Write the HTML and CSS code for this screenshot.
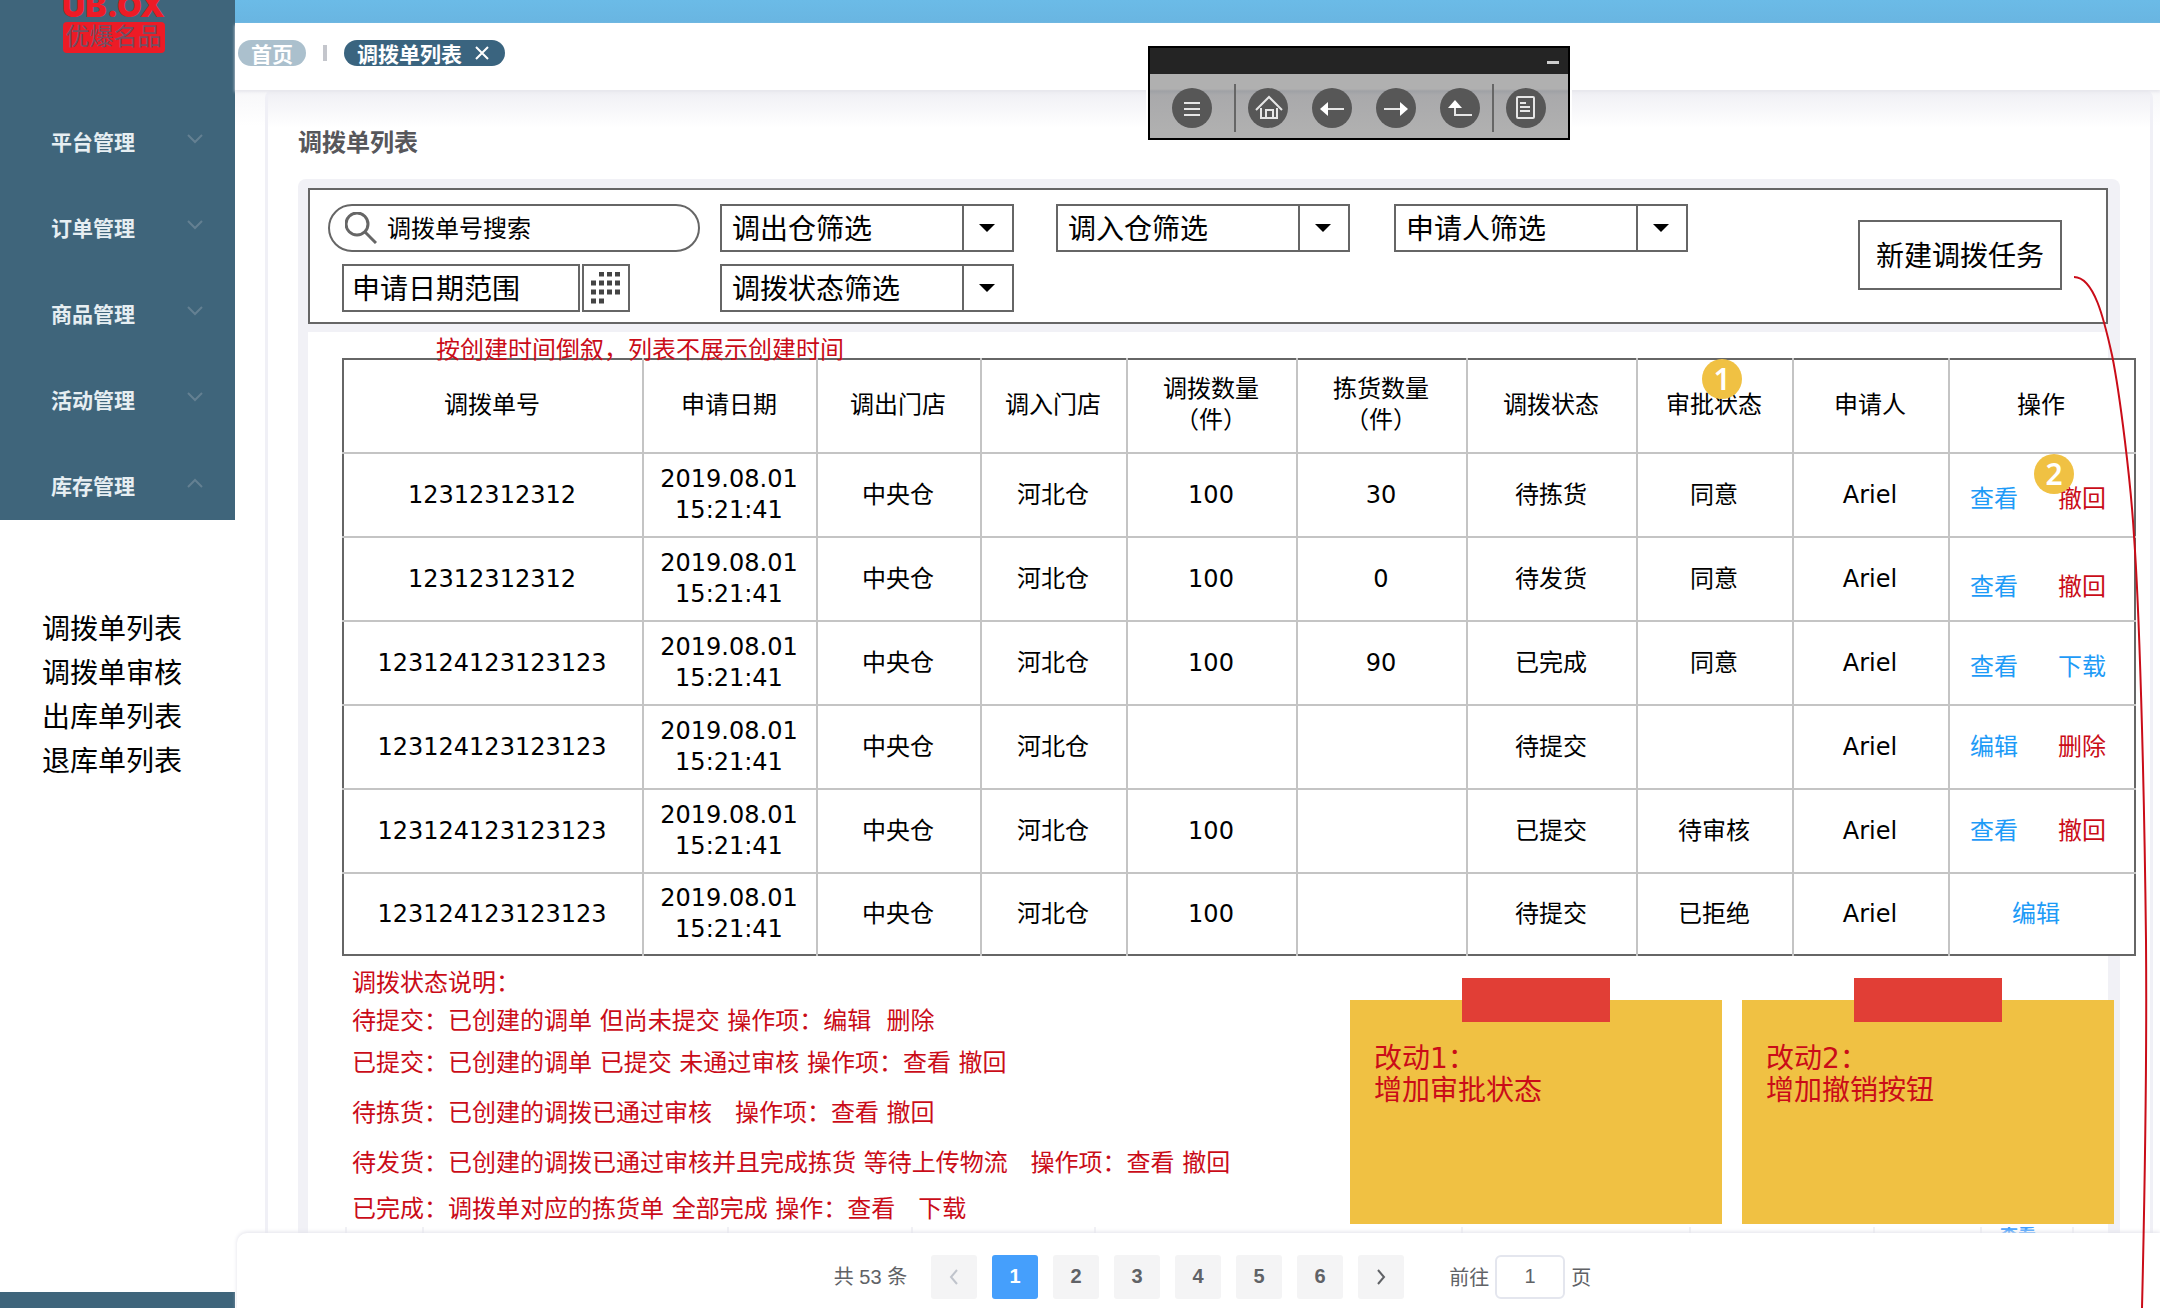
FILE: index.html
```html
<!DOCTYPE html>
<html lang="zh-CN">
<head>
<meta charset="utf-8">
<title>调拨单列表</title>
<link rel="stylesheet" href="styles.css">
</head>
<body>
<div class="page">
  <aside class="sidebar">
    <div class="sidebar-main">
      <div class="logo"><span class="logo-name">UB.OX</span><span class="logo-sub">优爆名品</span></div>
      <nav class="menu">
        <a href="#">平台管理<svg viewBox="0 0 16 10"><path d="M1 1l7 7 7-7"/></svg></a>
        <a href="#">订单管理<svg viewBox="0 0 16 10"><path d="M1 1l7 7 7-7"/></svg></a>
        <a href="#">商品管理<svg viewBox="0 0 16 10"><path d="M1 1l7 7 7-7"/></svg></a>
        <a href="#">活动管理<svg viewBox="0 0 16 10"><path d="M1 1l7 7 7-7"/></svg></a>
        <a href="#">库存管理<svg viewBox="0 0 16 10"><path d="M1 9l7-7 7 7"/></svg></a>
      </nav>
    </div>
    <nav class="submenu">
      <a href="#">调拨单列表</a>
      <a href="#">调拨单审核</a>
      <a href="#">出库单列表</a>
      <a href="#">退库单列表</a>
    </nav>
    <div class="sidebar-foot"></div>
  </aside>

  <main class="main">
    <div class="topbar"></div>
    <div class="tabs">
      <a class="tab tab-home" href="#">首页</a>
      <span class="tab-sep"></span>
      <a class="tab tab-current" href="#">调拨单列表<svg viewBox="0 0 14 14"><path d="M1 1l12 12M13 1L1 13"/></svg></a>
    </div>

    <div class="content">
      <section class="card">
        <h1 class="card-title">调拨单列表</h1>
        <div class="panel">
          <form class="filters">
            <div class="filter-grid">
              <label class="search">
                <svg viewBox="0 0 32 32"><circle cx="12" cy="12" r="11"/><path d="M20 20l11 11"/></svg>
                <input type="text" placeholder="调拨单号搜索" aria-label="调拨单号搜索">
              </label>
              <div class="select"><select aria-label="调出仓筛选"><option>调出仓筛选</option></select></div>
              <div class="select"><select aria-label="调入仓筛选"><option>调入仓筛选</option></select></div>
              <div class="select"><select aria-label="申请人筛选"><option>申请人筛选</option></select></div>
              <div class="date">
                <input type="text" placeholder="申请日期范围" aria-label="申请日期范围">
                <button type="button" aria-label="选择日期">
                  <svg viewBox="0 0 30 32"><path d="M8 2h5M16 2h5M24 2h5M0 11h5M8 11h5M16 11h5M24 11h5M0 20h5M8 20h5M16 20h5M24 20h5M0 29h5M8 29h5"/></svg>
                </button>
              </div>
              <div class="select"><select aria-label="调拨状态筛选"><option>调拨状态筛选</option></select></div>
            </div>
            <button class="create" type="button">新建调拨任务</button>
          </form>

          <div class="sheet">
            <p class="remark">按创建时间倒叙，列表不展示创建时间</p>
            <table class="orders">
              <colgroup><col class="c-no"><col class="c-date"><col class="c-out"><col class="c-in"><col class="c-qty"><col class="c-qty"><col class="c-qty"><col class="c-audit"><col class="c-audit"><col></colgroup>
              <thead>
                <tr><th>调拨单号</th><th>申请日期</th><th>调出门店</th><th>调入门店</th><th>调拨数量<br>（件）</th><th>拣货数量<br>（件）</th><th>调拨状态</th><th><span class="marked">审批状态<i class="badge badge-audit">1</i></span></th><th>申请人</th><th>操作</th></tr>
              </thead>
              <tbody>
                <tr><td>12312312312</td><td>2019.08.01<br>15:21:41</td><td>中央仓</td><td>河北仓</td><td>100</td><td>30</td><td>待拣货</td><td>同意</td><td>Ariel</td>
                  <td><div class="actions low"><a href="#">查看</a><a class="danger marked" href="#">撤回<i class="badge badge-undo">2</i></a></div></td></tr>
                <tr><td>12312312312</td><td>2019.08.01<br>15:21:41</td><td>中央仓</td><td>河北仓</td><td>100</td><td>0</td><td>待发货</td><td>同意</td><td>Ariel</td>
                  <td><div class="actions lower"><a href="#">查看</a><a class="danger" href="#">撤回</a></div></td></tr>
                <tr><td>123124123123123</td><td>2019.08.01<br>15:21:41</td><td>中央仓</td><td>河北仓</td><td>100</td><td>90</td><td>已完成</td><td>同意</td><td>Ariel</td>
                  <td><div class="actions low"><a href="#">查看</a><a href="#">下载</a></div></td></tr>
                <tr><td>123124123123123</td><td>2019.08.01<br>15:21:41</td><td>中央仓</td><td>河北仓</td><td></td><td></td><td>待提交</td><td></td><td>Ariel</td>
                  <td><div class="actions"><a href="#">编辑</a><a class="danger" href="#">删除</a></div></td></tr>
                <tr><td>123124123123123</td><td>2019.08.01<br>15:21:41</td><td>中央仓</td><td>河北仓</td><td>100</td><td></td><td>已提交</td><td>待审核</td><td>Ariel</td>
                  <td><div class="actions"><a href="#">查看</a><a class="danger" href="#">撤回</a></div></td></tr>
                <tr><td>123124123123123</td><td>2019.08.01<br>15:21:41</td><td>中央仓</td><td>河北仓</td><td>100</td><td></td><td>待提交</td><td>已拒绝</td><td>Ariel</td>
                  <td><div class="actions single"><a href="#">编辑</a></div></td></tr>
              </tbody>
            </table>

            <div class="below">
              <div class="notes">
                <p>调拨状态说明：</p>
                <p>待提交：已创建的调单 但尚未提交 操作项：编辑&nbsp; 删除</p>
                <p class="gap-s">已提交：已创建的调单 已提交 未通过审核 操作项：查看 撤回</p>
                <p class="gap-l">待拣货：已创建的调拨已通过审核&nbsp;&nbsp; 操作项：查看 撤回</p>
                <p class="gap-l">待发货：已创建的调拨已通过审核并且完成拣货 等待上传物流&nbsp;&nbsp; 操作项：查看 撤回</p>
                <p class="gap-m">已完成：调拨单对应的拣货单 全部完成 操作：查看&nbsp;&nbsp; 下载</p>
              </div>
              <div class="stickies">
                <div class="sticky">改动1：<br>增加审批状态</div>
                <div class="sticky">改动2：<br>增加撤销按钮</div>
              </div>
            </div>
            <div class="peek"><span></span><span></span><span></span><span></span><span></span><span></span><span></span><span></span><span class="peek-link">查看</span><span></span></div>
          </div>
        </div>
      </section>
    </div>

    <footer class="pager">
      <span class="total">共 53 条</span>
      <div class="pages">
        <button type="button" class="off" aria-label="上一页"><svg viewBox="0 0 10 16"><path d="M8 1L2 8l6 7"/></svg></button>
        <button type="button" class="current">1</button>
        <button type="button">2</button>
        <button type="button">3</button>
        <button type="button">4</button>
        <button type="button">5</button>
        <button type="button">6</button>
        <button type="button" aria-label="下一页"><svg viewBox="0 0 10 16"><path d="M2 1l6 7-6 7"/></svg></button>
      </div>
      <label class="jump">前往<input type="text" value="1">页</label>
    </footer>
  </main>

  <svg class="flow-line" width="100" height="1044" viewBox="0 0 100 1044"><path d="M14 13C34 13 44 55 52 91C60 130 71 220 74 272C79 340 84 500 86 676C87 800 84 960 82 1044"/></svg>

  <div class="toolbox">
    <div class="toolbox-title"><span></span></div>
    <div class="toolbox-body">
      <button type="button" aria-label="菜单"><svg viewBox="0 0 40 40"><path d="M12 15h16M12 21h16M12 27h16"/></svg></button>
      <div class="toolbox-nav">
        <button type="button" aria-label="主页"><svg viewBox="0 0 40 40"><path d="M8 22L21 9l13 13M13 20v10h16V20M18 30v-8h7v8"/></svg></button>
        <button type="button" aria-label="后退"><svg viewBox="0 0 40 40"><path d="M12 21h20"/><path class="fill" d="M8 21l8-7v14z"/></svg></button>
        <button type="button" aria-label="前进"><svg viewBox="0 0 40 40"><path d="M8 21h20"/><path class="fill" d="M32 21l-8-7v14z"/></svg></button>
        <button type="button" aria-label="返回上级"><svg viewBox="0 0 40 40"><path d="M15 18v9h17"/><path class="fill" d="M15 12l7 8H8z"/></svg></button>
      </div>
      <button type="button" aria-label="文档"><svg viewBox="0 0 40 40"><rect x="11" y="9" width="17" height="21" rx="1"/><path d="M14 15h6M14 19h10M14 23h10"/></svg></button>
    </div>
  </div>
</div>
</body>
</html>
```
FILE: styles.css
```css
* { box-sizing: border-box; }

body {
  margin: 0;
  background: #fff;
  color: #000;
  font-family: "DejaVu Sans", "Noto Sans CJK SC", sans-serif;
  font-size: 24px;
  overflow-x: hidden;
}

a { color: inherit; text-decoration: none; }
p { margin: 0; }
input, select, button { font-family: inherit; color: inherit; }
svg { fill: none; stroke: currentColor; stroke-width: 2; flex: none; }

.page { position: relative; display: flex; min-height: 100vh; }

/* Sidebar */
.sidebar { width: 235px; flex: none; display: flex; flex-direction: column; background: #fff; }
.sidebar-main { background: #3f657b; }
.logo { height: 108px; display: flex; flex-direction: column; align-items: center; padding-right: 8px; overflow: hidden; }
.logo-name {
  height: 18px;
  display: flex;
  align-items: flex-end;
  color: #ed1b26;
  font: 900 32px/24px Inter, sans-serif;
}
.logo-sub {
  width: 102px;
  height: 31px;
  margin-top: 4px;
  border-radius: 4px;
  background: #ed1b26;
  color: #735064;
  font-size: 24px;
  line-height: 30px;
  text-align: center;
}
.menu { display: flex; flex-direction: column; gap: 20px; padding-bottom: 2px; }
.menu a {
  height: 66px;
  padding: 0 32px 0 51px;
  display: flex;
  align-items: center;
  justify-content: space-between;
  color: #e6eef2;
  font-size: 21px;
  font-weight: 700;
}
.menu svg { width: 16px; height: 10px; margin-bottom: 4px; color: #648092; }
.submenu { flex: 1; display: flex; flex-direction: column; padding: 88px 0 0 42px; font-size: 28px; line-height: 44px; }
.sidebar-foot { height: 19px; background: #3f657b; }

/* Header */
.main { flex: 1; min-width: 0; display: flex; flex-direction: column; }
.topbar { height: 23px; background: linear-gradient(#6bbbe7, #69b5e1); }
.tabs {
  position: relative;
  height: 67px;
  padding: 0 0 8px 3px;
  display: flex;
  align-items: center;
  gap: 17px;
  background: #fff;
  box-shadow: 0 2px 3px #e6e6ec;
}
.tab {
  height: 26px;
  padding: 0 13px;
  display: flex;
  align-items: center;
  border-radius: 13px;
  color: #fff;
  font-size: 21px;
  font-weight: 700;
}
.tab-home { background: #abc0cd; }
.tab-sep { width: 4px; height: 16px; background: #c4c6cc; }
.tab-current { gap: 13px; padding-right: 16px; background: #3a647f; }
.tab-current svg { width: 14px; height: 14px; }

/* Card */
.content { flex: 1; display: flex; padding: 0 7px 0 30px; background: linear-gradient(#f7f7f9, #fff 36px); }
.card {
  flex: 1;
  min-width: 0;
  display: flex;
  flex-direction: column;
  padding: 36px 30px 0;
  border: solid #f0f0f6;
  border-width: 0 3px;
  border-radius: 8px 8px 0 0;
  background: linear-gradient(#efeff4, #fff 38px);
}
.card-title { margin: 0 0 19px; color: #57575b; font-size: 24px; line-height: 34px; }
.panel { flex: 1; padding: 9px 12px 0 10px; border-radius: 8px 8px 0 0; background: #f1f1f6; }

/* Filters */
.filters {
  display: flex;
  align-items: flex-start;
  justify-content: space-between;
  height: 136px;
  margin-bottom: 8px;
  padding: 14px 44px 0 18px;
  border: 2px solid #666;
  background: #fff;
}
.filter-grid { display: grid; grid-template-columns: 392px 336px 338px 294px; row-gap: 12px; }
.search { width: 372px; height: 48px; padding-left: 15px; display: flex; align-items: center; gap: 10px; border: 2px solid #666; border-radius: 24px; }
.search svg { width: 32px; height: 32px; color: #666; stroke-width: 3; }
.search input { flex: 1; min-width: 0; padding: 2px 0 0; border: 0; background: none; font-size: 24px; }
::placeholder { color: #000; opacity: 1; }
.select { width: 294px; height: 48px; display: grid; grid-template-columns: 1fr 50px; border: 2px solid #666; }
.select select {
  grid-area: 1 / 1 / 2 / 3;
  padding: 2px 60px 0 10px;
  border: 0;
  border-radius: 0;
  background: #fff;
  font-size: 28px;
  appearance: none;
}
.select::after {
  content: "";
  grid-area: 1 / 2;
  border-left: 2px solid #666;
  pointer-events: none;
}
.select::before {
  content: "";
  grid-area: 1 / 2;
  z-index: 1;
  place-self: center;
  border: solid transparent;
  border-width: 8px 8px 0;
  border-top-color: #000;
  pointer-events: none;
}
.date { display: flex; gap: 2px; padding-left: 14px; }
.date input { width: 238px; height: 48px; padding: 2px 8px 0; border: 2px solid #666; font-size: 28px; }
.date button { width: 48px; height: 48px; padding: 0; display: grid; place-items: center; border: 2px solid #666; background: #fff; }
.date svg { width: 30px; height: 32px; color: #444; stroke-width: 5; }
.create { width: 204px; height: 70px; margin-top: 16px; padding: 0 0 2px; border: 2px solid #666; background: #fff; font-size: 28px; }

/* Table */
.sheet { background: #fff; }
.remark { position: relative; z-index: 1; padding-left: 128px; margin-bottom: -10px; color: #ca0c18; line-height: 36px; }
.orders {
  width: calc(100% - 6px);
  margin-left: 34px;
  border: 2px solid #666;
  border-collapse: collapse;
  table-layout: fixed;
  background: #fff;
  line-height: 31px;
  text-align: center;
}
.c-no { width: 300px; }
.c-date { width: 174px; }
.c-out { width: 164px; }
.c-in { width: 146px; }
.c-qty { width: 170px; }
.c-audit { width: 156px; }
.orders th { height: 94px; padding: 0 2px 2px 0; font-weight: 400; }
.orders td { height: 84px; padding: 0 2px 0 0; }
.orders tbody tr:last-child td { height: 82px; }
.orders tbody td { border-top: 2px solid #c4c4c4; }
.orders th + th, .orders td + td { border-left: 2px solid #c4c4c4; }
.actions { display: flex; gap: 40px; padding-left: 20px; color: #1e9bf7; }
.actions.low { padding-top: 8px; }
.actions.lower { padding-top: 16px; }
.actions.single { justify-content: center; padding: 0 10px 0 0; }
.danger { color: #ca0c18; }
.marked { position: relative; }
.badge {
  position: absolute;
  width: 40px;
  height: 40px;
  border-radius: 50%;
  background: #f0c143;
  color: #fff;
  font-family: "Noto Sans", sans-serif;
  font-size: 30px;
  font-style: normal;
  font-weight: 600;
  line-height: 40px;
  text-align: center;
}
.badge-audit { left: 36px; top: -32px; }
.badge-undo { left: -24px; top: -30px; }

/* Notes under the table */
.below { display: flex; justify-content: space-between; min-height: 268px; }
.notes { padding: 9px 0 0 44px; color: #ca0c18; line-height: 36px; white-space: nowrap; }
.notes p + p { margin-top: 2px; }
.notes p.gap-s { margin-top: 6px; }
.notes p.gap-m { margin-top: 10px; }
.notes p.gap-l { margin-top: 14px; }
.stickies { display: flex; align-items: flex-start; gap: 20px; margin: 44px -6px 0 0; }
.sticky {
  position: relative;
  width: 372px;
  height: 224px;
  padding: 43px 24px;
  background: #f0c143;
  color: #ca0c18;
  font-size: 28px;
  line-height: 32px;
}
.sticky::before {
  content: "";
  position: absolute;
  top: -22px;
  left: 112px;
  width: 148px;
  height: 44px;
  background: #e13e36;
}
.peek { display: grid; grid-template-columns: 77px 305px 184px 183px 367px 228px 184px 107px 92px 36px; height: 6px; padding-left: 37px; overflow: hidden; }
.peek span { border-left: 2px solid #f1f1f5; }
.peek .peek-link { padding-left: 18px; color: #409eff; font-size: 18px; font-weight: 700; line-height: 18px; }

/* Pagination */
.pager {
  position: relative;
  height: 78px;
  margin-left: 2px;
  padding: 9px 0 0 28px;
  display: flex;
  align-items: center;
  justify-content: center;
  border-radius: 10px 0 0 0;
  background: #fff;
  box-shadow: 0 -1px 4px #e2e2ea;
  color: #606266;
  font-family: "Liberation Sans", "Noto Sans CJK SC", sans-serif;
  font-size: 20px;
}
.total { padding-bottom: 2px; }
.pages { display: flex; gap: 15px; margin: 0 45px 0 24px; }
.pages button {
  width: 46px;
  height: 44px;
  padding: 0;
  display: grid;
  place-items: center;
  border: 0;
  border-radius: 3px;
  background: #f4f4f5;
  font-size: 20px;
  font-weight: 700;
}
.pages svg { width: 10px; height: 16px; }
.pages .off { color: #c0c4cc; }
.pages .current { background: #459ffc; color: #fff; }
.jump { display: flex; align-items: center; gap: 6px; }
.jump input { width: 70px; height: 44px; padding: 0; border: 2px solid #e4e6ee; border-radius: 6px; font-size: 20px; text-align: center; }

/* Overlays */
.flow-line { position: absolute; right: 0; top: 264px; color: #ca0c18; pointer-events: none; }
.toolbox { position: absolute; left: 1148px; top: 46px; width: 422px; border: 2px solid #000; outline: 2px solid #fff; background: #b0b0b0; }
.toolbox-title { height: 26px; padding: 0 9px; display: flex; align-items: center; justify-content: flex-end; background: #242424; }
.toolbox-title span { width: 12px; height: 3px; margin-top: 3px; background: #ccc; }
.toolbox-body { height: 64px; padding: 4px 22px 0; display: flex; align-items: center; background: linear-gradient(#b0b0b0 15px, #9fa1a5 17px, #a9a9ab 21px, #b0b0b0 56px); }
.toolbox-nav { height: 48px; margin: 0 12px 0 22px; padding: 0 12px; display: flex; align-items: center; gap: 24px; border: solid #666; border-width: 0 2px; }
.toolbox button { width: 40px; height: 40px; padding: 0; border: 0; border-radius: 50%; background: #575757; color: #e6e6e6; }
.toolbox button svg { display: block; width: 40px; height: 40px; }
.toolbox .fill { fill: #fff; stroke: none; }
```
